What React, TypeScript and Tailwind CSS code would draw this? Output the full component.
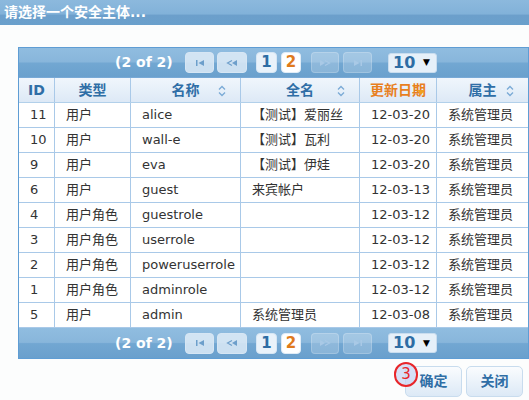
import React from "react";

const FONT = { fontFamily: '"DejaVu Sans", "Noto Sans CJK SC", sans-serif' };

const rows: [string, string, string, string, string, string][] = [
  ["11", "用户", "alice", "【测试】爱丽丝", "12-03-20", "系统管理员"],
  ["10", "用户", "wall-e", "【测试】瓦利", "12-03-20", "系统管理员"],
  ["9", "用户", "eva", "【测试】伊娃", "12-03-20", "系统管理员"],
  ["6", "用户", "guest", "来宾帐户", "12-03-13", "系统管理员"],
  ["4", "用户角色", "guestrole", "", "12-03-12", "系统管理员"],
  ["3", "用户角色", "userrole", "", "12-03-12", "系统管理员"],
  ["2", "用户角色", "poweruserrole", "", "12-03-12", "系统管理员"],
  ["1", "用户角色", "adminrole", "", "12-03-12", "系统管理员"],
  ["5", "用户", "admin", "系统管理员", "12-03-08", "系统管理员"],
];

const widths = ["w-[36px]", "w-[76px]", "w-[110px]", "w-[119px]", "w-[77px]", "w-[91px]"];

function SortIcon() {
  return (
    <svg width="8" height="12" viewBox="0 0 8 12" className="absolute right-[14px] top-[7px]">
      <path d="M1 4.5 L4 1.5 L7 4.5" fill="none" stroke="#7aaad6" strokeWidth="1.3" />
      <path d="M1 7.5 L4 10.5 L7 7.5" fill="none" stroke="#7aaad6" strokeWidth="1.3" />
    </svg>
  );
}

function NavIcon({ kind, faded }: { kind: "first" | "prev" | "next" | "last"; faded?: boolean }) {
  const c = faded ? "#a9c9e6" : "#6d9fcb";
  return (
    <svg width="12" height="8" viewBox="0 0 12 8">
      {kind === "first" && (
        <>
          <rect x="2" y="1" width="1.5" height="6" fill={c} />
          <path d="M10 1 L4.5 4 L10 7 Z" fill={c} />
        </>
      )}
      {kind === "prev" && (
        <>
          <path d="M6 1.5 L1.5 4 L6 6.5" fill="none" stroke={c} strokeWidth="1.2" />
          <path d="M11 1 L6 4 L11 7 Z" fill={c} />
        </>
      )}
      {kind === "next" && (
        <>
          <path d="M1 1 L6 4 L1 7 Z" fill={c} />
          <path d="M6 1.5 L10.5 4 L6 6.5" fill="none" stroke={c} strokeWidth="1.2" />
        </>
      )}
      {kind === "last" && (
        <>
          <path d="M2 1 L7.5 4 L2 7 Z" fill={c} />
          <rect x="8.5" y="1" width="1.5" height="6" fill={c} />
        </>
      )}
    </svg>
  );
}

function Paginator({ top }: { top?: boolean }) {
  return (
    <div
      className={`h-[30px] flex items-center pl-[96px] ${top ? "border-b border-[#78a9d6]" : ""}`}
      style={{
        background:
          "linear-gradient(to bottom, #90bde0 0%, #88b6db 48%, #72a7d2 52%, #6aa0cd 100%)",
      }}
    >
      <span className="text-white font-bold text-[14px] w-[47px] whitespace-nowrap">(2 of 2)</span>
      <div className="ml-[23px] w-[29px] h-[21px] rounded-[4px] bg-[#e4eff9]/80 border border-[#d6e6f4] flex items-center justify-center">
        <NavIcon kind="first" />
      </div>
      <div className="ml-[3px] w-[30px] h-[21px] rounded-[4px] bg-[#e4eff9]/80 border border-[#d6e6f4] flex items-center justify-center">
        <NavIcon kind="prev" />
      </div>
      <div className="ml-[9px] w-[21px] h-[21px] rounded-[4px] bg-[#e9f2fa] border border-[#d6e6f4] flex items-center justify-center text-[15px] font-bold text-[#2e6da4]">
        1
      </div>
      <div className="ml-[4px] w-[20px] h-[21px] rounded-[4px] bg-white border border-[#e0ecf7] flex items-center justify-center text-[15px] font-bold text-[#e07a1c]">
        2
      </div>
      <div className="ml-[10px] w-[28px] h-[21px] rounded-[4px] bg-white/20 border border-white/20 flex items-center justify-center">
        <NavIcon kind="next" faded />
      </div>
      <div className="ml-[4px] w-[29px] h-[21px] rounded-[4px] bg-white/20 border border-white/20 flex items-center justify-center">
        <NavIcon kind="last" faded />
      </div>
      <div className="ml-[16px] w-[49px] h-[20px] rounded-[3px] bg-[#e6f0f9] border border-[#c9ddef] flex items-center pl-[4px] pr-[6px] justify-between">
        <span className="text-[16px] font-bold text-[#2e6da4] leading-none">10</span>
        <span className="text-[9px] text-black leading-none">▼</span>
      </div>
    </div>
  );
}

export default function App() {
  const headers = ["ID", "类型", "名称", "全名", "更新日期", "属主"];
  return (
    <div className="w-[529px] h-[400px] bg-[#fcfdfd] overflow-hidden relative" style={FONT}>
      <div
        className="h-[25px] flex items-center pl-[4px] text-white font-bold text-[14px]"
        style={{ background: "linear-gradient(to bottom, #8cb9dd 0%, #82b2d9 55%, #6c9fcb 62%, #6aa0cc 100%)" }}
      >
        请选择一个安全主体...
      </div>
      <div className="mt-[22px] ml-[18px] w-[511px] border border-[#5f9dd4]">
        <Paginator top />
        <div
          className="flex h-[25px] border-b border-[#b2d0ea]"
          style={{ background: "linear-gradient(to bottom, #f0f6fc, #dde9f6)" }}
        >
          {headers.map((h, i) => (
            <div
              key={h}
              className={`${widths[i]} relative flex items-center justify-center text-[14px] font-bold ${
                i < 5 ? "border-r border-[#a9c9e8]" : ""
              } ${i === 4 ? "text-[#e8801f]" : "text-[#2f6ea6]"}`}
            >
              {h}
              {(i === 2 || i === 3 || i === 5) && <SortIcon />}
              {i === 4 && (
                <span className="absolute left-[57px] top-[12px] w-0 h-0 border-l-[4px] border-r-[4px] border-t-[5px] border-l-transparent border-r-transparent border-t-[#f0a020]" />
              )}
            </div>
          ))}
        </div>
        {rows.map((r, ri) => (
          <div key={ri} className="flex h-[25px] border-b border-[#a9c9e8] bg-white">
            {r.map((c, i) => (
              <div
                key={i}
                className={`${widths[i]} flex items-center pl-[11px] text-[13px] text-[#333] whitespace-nowrap ${
                  i < 5 ? "border-r border-[#a9c9e8]" : ""
                } ${i === 3 && c.startsWith("【") ? "pl-[6px]" : ""}`}
              >
                {c}
              </div>
            ))}
          </div>
        ))}
        <Paginator />
      </div>
      <div className="mt-[7px] flex justify-end pr-[6px] gap-[4px]">
        <button
          className="w-[57px] h-[31px] rounded-[5px] border border-[#c8dcee] text-[14px] font-bold text-[#2f6ea6]"
          style={{ background: "linear-gradient(to bottom, #fafcfe, #dce9f6)" }}
        >
          确定
        </button>
        <button
          className="w-[57px] h-[31px] rounded-[5px] border border-[#c8dcee] text-[14px] font-bold text-[#2f6ea6]"
          style={{ background: "linear-gradient(to bottom, #fafcfe, #dce9f6)" }}
        >
          关闭
        </button>
      </div>
      <div className="absolute left-[394px] top-[362px] w-[24px] h-[25px] rounded-full border-2 border-[#e8262a] bg-[#c8d4f4]/70 flex items-center justify-center text-[15px] text-[#e8262a] leading-none">
        3
      </div>
    </div>
  );
}
